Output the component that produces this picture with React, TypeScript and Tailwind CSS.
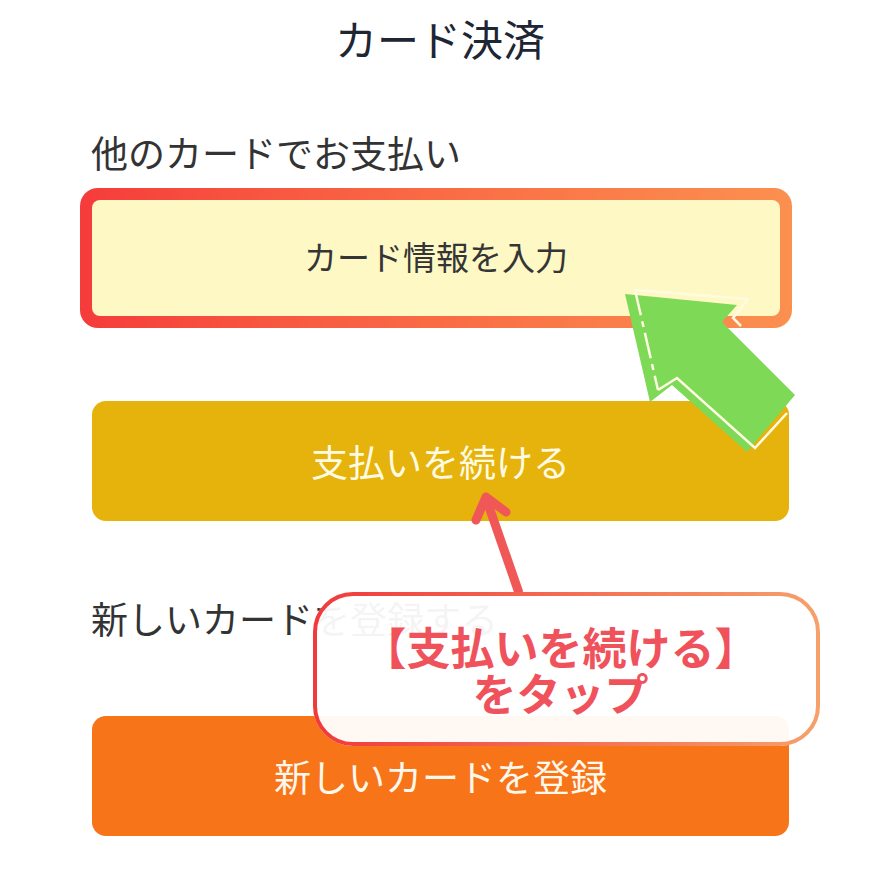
import React from "react";

export default function App() {
  const jp = { fontFamily: '"Noto Sans CJK JP", "Noto Sans", sans-serif' } as React.CSSProperties;
  return (
    <div className="relative w-[880px] h-[880px] bg-white overflow-hidden" style={jp}>
      <div className="flex flex-col">
        <div className="h-[84px] flex items-center justify-center text-[42px] text-[#1e2533] leading-none pb-[8px]">
          カード決済
        </div>
        <div className="h-[104px] flex items-center pl-[91px] text-[37px] text-[#333333] leading-none pt-[32px]">
          他のカードでお支払い
        </div>
        <div className="ml-[80px] w-[712px] h-[140px] rounded-[18px] bg-gradient-to-r from-[#f53b3b] to-[#fb904f] p-[12px]">
          <div className="w-full h-full rounded-[8px] bg-[#fef8c4] flex items-center justify-center text-[33px] text-[#353535] leading-none pb-[4px]">
            カード情報を入力
          </div>
        </div>
        <div className="mt-[73px] ml-[92px] w-[697px] h-[120px] rounded-[14px] bg-[#e6b20c] flex items-center justify-center text-[37px] text-[#fffbe3] leading-none">
          支払いを続ける
        </div>
        <div className="h-[195px] flex items-center pl-[91px] text-[37px] text-[#333333] leading-none">
          新しいカードを登録する
        </div>
        <div className="ml-[92px] w-[697px] h-[120px] rounded-[14px] bg-[#f77419] flex items-center justify-center text-[37px] text-[#fff8ec] leading-none">
          新しいカードを登録
        </div>
      </div>

      {/* green arrow + red arrow */}
      <svg className="absolute left-0 top-0" width="880" height="880" viewBox="0 0 880 880">
        <polygon
          points="625,294 737,305 722,322 795,395 747,452 672,385 650,402"
          fill="#7ed957"
        />
        <polyline points="748,299 733,318 741,326" fill="none" stroke="#fffbe0" strokeWidth="2.5" />
        <polyline points="635,290 748,299" fill="none" stroke="#fffbe0" strokeWidth="2.5" />
        <polyline points="787,413 755,448 677,378 658,390" fill="none" stroke="#fffbe0" strokeWidth="2.5" />
        <polyline
          points="635,290 658,390"
          fill="none"
          stroke="#fffbe0"
          strokeWidth="2.5"
          strokeDasharray="26 6 6 6"
        />
        <line x1="519" y1="593" x2="486" y2="498" stroke="#f05757" strokeWidth="9" strokeLinecap="butt" />
        <polyline
          points="476,520 486,497 506,512"
          fill="none"
          stroke="#f05757"
          strokeWidth="9"
          strokeLinecap="round"
          strokeLinejoin="round"
        />
      </svg>

      {/* callout */}
      <div className="absolute left-[313px] top-[592px] w-[507px] h-[154px]">
        <div className="absolute inset-0 rounded-[40px] bg-white/95" />
        <svg className="absolute inset-0" width="507" height="154" viewBox="0 0 507 154">
          <defs>
            <linearGradient id="cb" x1="0" y1="0" x2="1" y2="0">
              <stop offset="0" stopColor="#f03a3c" />
              <stop offset="1" stopColor="#f6a06a" />
            </linearGradient>
          </defs>
          <rect x="2" y="2" width="503" height="150" rx="38" fill="none" stroke="url(#cb)" strokeWidth="4" />
        </svg>
        <div className="relative w-full h-full flex flex-col items-center justify-center text-[#f0525c] font-bold text-[44px] leading-[46px] pr-[12px]">
          <div>【支払いを続ける】</div>
          <div>をタップ</div>
        </div>
      </div>
    </div>
  );
}
